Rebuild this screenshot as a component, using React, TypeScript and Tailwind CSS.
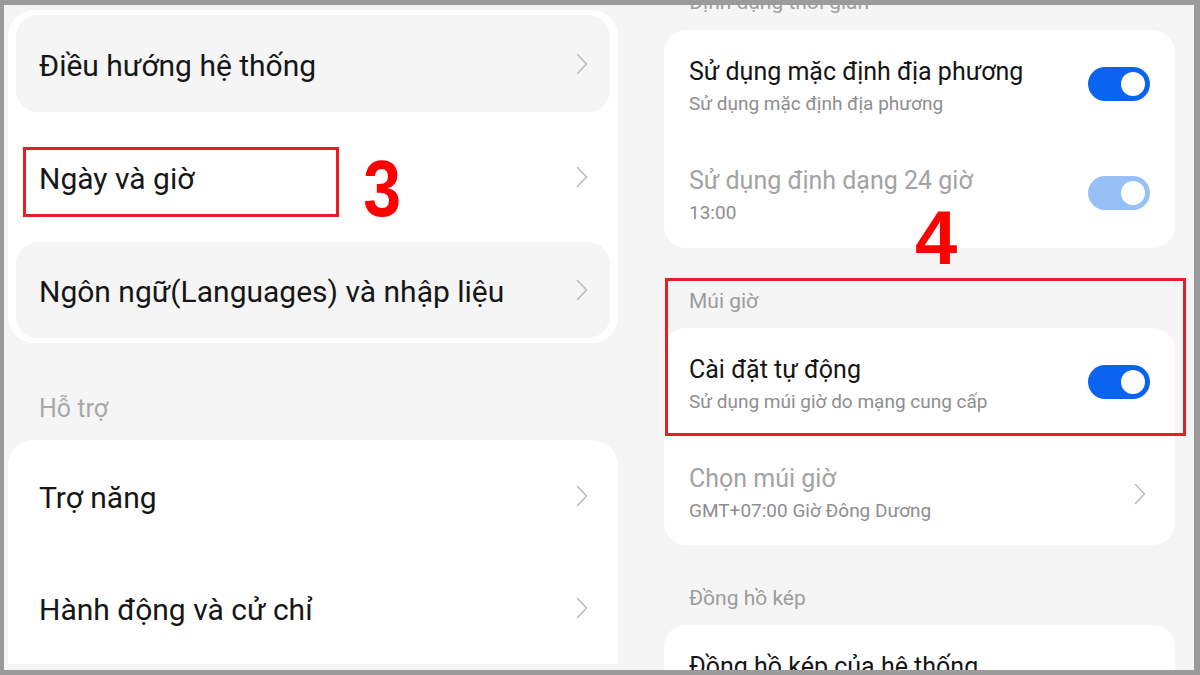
import React from 'react';

const Chevron: React.FC<{ className?: string }> = ({ className }) => (
  <svg viewBox="0 0 12 22" className={className} fill="none">
    <polyline points="1.5,1.5 10.5,11 1.5,20.5" stroke="#bdbdbd" strokeWidth="1.6" strokeLinecap="round" strokeLinejoin="round" />
  </svg>
);

const Toggle: React.FC<{ disabled?: boolean }> = ({ disabled }) => (
  <div className={`relative w-[62px] h-[34px] rounded-full shrink-0 ${disabled ? 'bg-[#97c0f7]' : 'bg-[#0b63f2]'}`}>
    <div className="absolute right-[5px] top-[5px] w-[24px] h-[24px] rounded-full bg-white" />
  </div>
);

const LeftRow: React.FC<{ label: string; h: string; bg?: string }> = ({ label, h, bg = '' }) => (
  <div className={`flex items-center justify-between pl-[23px] pr-[22px] pt-[4px] ${h} ${bg}`}>
    <span className="text-[30px] text-[#161616] leading-none">{label}</span>
    <Chevron className="w-[12px] h-[22px] -mt-[4px]" />
  </div>
);

const SettingRow: React.FC<{ title: string; sub: string; h: string; muted?: boolean; right: React.ReactNode }> = ({ title, sub, h, muted, right }) => (
  <div className={`flex items-start justify-between px-[25px] pt-[26px] ${h}`}>
    <div className="flex flex-col">
      <span className={`text-[25px] leading-[32px] ${muted ? 'text-[#a3a3a3]' : 'text-[#141414]'}`}>{title}</span>
      <span className="text-[19px] leading-[30px] mt-[1px] text-[#8e8e8e]">{sub}</span>
    </div>
    <div className="mt-[11px]">{right}</div>
  </div>
);

export default function App() {
  return (
    <div className="relative w-[1200px] h-[675px] bg-[#9b9b9b] pt-[5px] pl-[4px] pr-[6px] pb-[5px] font-['Roboto','Noto_Sans',sans-serif]">
      <div className="flex h-full overflow-hidden">
        {/* left screen */}
        <div className="w-[616px] h-full bg-[#f5f5f5] overflow-hidden">
          <div className="ml-[4px] mt-[5px] w-[610px] rounded-[26px] bg-white px-[8px] py-[5px]">
            <LeftRow label="Điều hướng hệ thống" h="h-[97px]" bg="bg-[#f5f5f5] rounded-[22px]" />
            <LeftRow label="Ngày và giờ" h="h-[130px]" />
            <LeftRow label="Ngôn ngữ(Languages) và nhập liệu" h="h-[96px]" bg="bg-[#f5f5f5] rounded-[22px]" />
          </div>
          <div className="h-[97px] pt-[34px] pl-[35px] flex items-center">
            <span className="text-[25px] text-[#a8a8a8]">Hỗ trợ</span>
          </div>
          <div className="ml-[4px] w-[610px] rounded-t-[26px] bg-white px-[8px]">
            <LeftRow label="Trợ năng" h="h-[112px]" />
            <LeftRow label="Hành động và cử chỉ" h="h-[112px]" />
          </div>
        </div>

        {/* right screen */}
        <div className="flex-1 h-full bg-[#f5f5f5] overflow-hidden">
          <div className="h-[25px] pl-[69px]">
            <div className="relative -top-[15px] text-[21px] leading-[24px] text-[#a0a0a0]">Định dạng thời gian</div>
          </div>
          <div className="ml-[44px] w-[511px] rounded-[22px] bg-white">
            <SettingRow title="Sử dụng mặc định địa phương" sub="Sử dụng mặc định địa phương" h="h-[109px]" right={<Toggle />} />
            <SettingRow title="Sử dụng định dạng 24 giờ" sub="13:00" h="h-[109px]" muted right={<Toggle disabled />} />
          </div>
          <div className="h-[80px] pt-[39px] pl-[69px]">
            <span className="text-[21px] leading-[28px] text-[#9c9c9c]">Múi giờ</span>
          </div>
          <div className="ml-[44px] w-[511px] rounded-[22px] bg-white">
            <SettingRow title="Cài đặt tự động" sub="Sử dụng múi giờ do mạng cung cấp" h="h-[109px]" right={<Toggle />} />
            <SettingRow
              title="Chọn múi giờ"
              sub="GMT+07:00 Giờ Đông Dương"
              h="h-[108px]"
              muted
              right={<Chevron className="w-[12px] h-[22px] mt-[9px] mr-[4px]" />}
            />
          </div>
          <div className="h-[80px] pt-[39px] pl-[69px]">
            <span className="text-[21px] leading-[28px] text-[#9c9c9c]">Đồng hồ kép</span>
          </div>
          <div className="ml-[44px] w-[511px] h-[120px] rounded-t-[22px] bg-white px-[25px] pt-[26px]">
            <span className="text-[25px] leading-[32px] text-[#141414]">Đồng hồ kép của hệ thống</span>
          </div>
        </div>
      </div>

      {/* annotations */}
      <div className="absolute left-[23px] top-[147px] w-[316px] h-[70px] border-[3px] border-[#ea1c24]" />
      <div className="absolute left-[360px] top-[144px] text-[80px] leading-[90px] font-bold text-[#ff0000] font-['Liberation_Sans',sans-serif] scale-x-85">3</div>
      <div className="absolute left-[665px] top-[278px] w-[521px] h-[158px] border-[3px] border-[#ea1c24]" />
      <div className="absolute left-[915px] top-[196px] text-[76px] leading-[84px] font-bold text-[#ff0000] font-['Liberation_Sans',sans-serif]">4</div>
    </div>
  );
}
